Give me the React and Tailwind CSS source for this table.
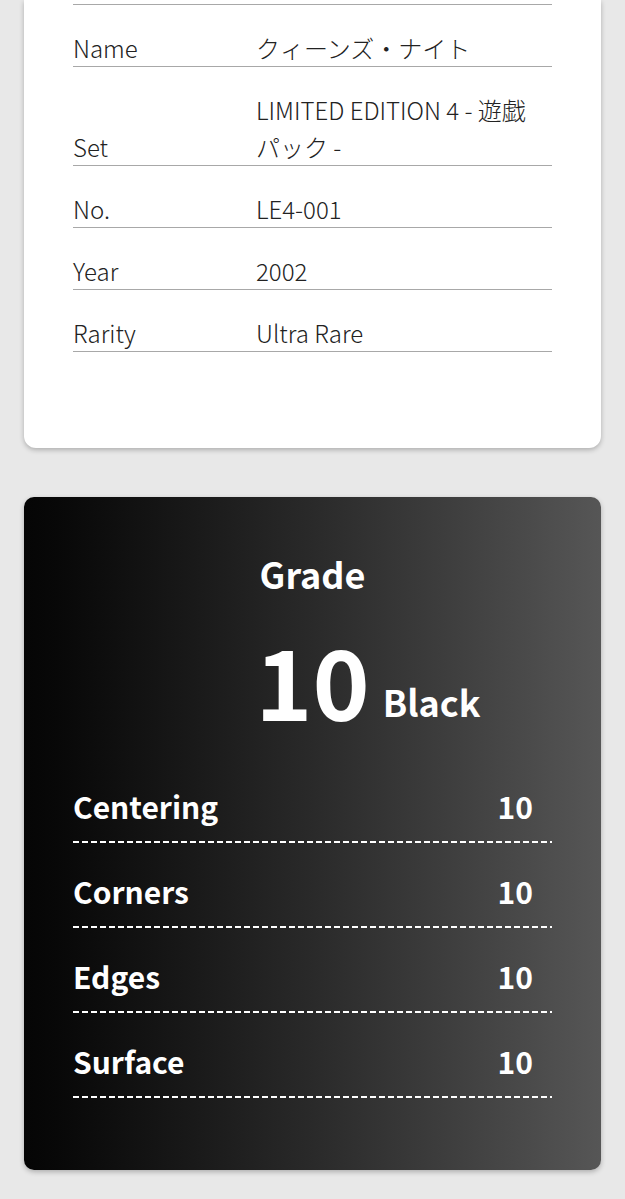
import React from "react";

const specs = [
  { label: "Name", value: "クィーンズ・ナイト" },
  { label: "Set", value: "LIMITED EDITION 4 - 遊戯パック -" },
  { label: "No.", value: "LE4-001" },
  { label: "Year", value: "2002" },
  { label: "Rarity", value: "Ultra Rare" },
];

const subgrades = [
  { label: "Centering", score: 10 },
  { label: "Corners", score: 10 },
  { label: "Edges", score: 10 },
  { label: "Surface", score: 10 },
];

const App = () => {
  return (
    <div
      className="min-h-[1199px] bg-[#e8e8e8] px-[24px] overflow-hidden"
      style={{ fontFamily: '"Noto Sans CJK JP", "Noto Sans", sans-serif' }}
    >
      {/* card details */}
      <div className="bg-white rounded-b-[12px] shadow-[0_2px_5px_rgba(0,0,0,0.25)] px-[49px] pb-[96px]">
        <div className="h-[5px] border-b border-[#a8a8a8]"></div>
        {specs.map((row) => (
          <div
            key={row.label}
            className="flex items-end pt-[24px] border-b border-[#a8a8a8] text-[24px] leading-[37px] font-light text-[#222]"
          >
            <div className="w-[183px] shrink-0">{row.label}</div>
            <div className="flex-1 pr-[16px]">{row.value}</div>
          </div>
        ))}
      </div>

      {/* grade */}
      <div className="mt-[49px] rounded-[10px] shadow-[0_2px_5px_rgba(0,0,0,0.25)] bg-gradient-to-r from-[#050505] to-[#565656] px-[49px] pt-[58px] pb-[72px] text-white font-bold">
        <div className="text-center text-[36px] leading-none">Grade</div>
        <div className="mt-[39px] flex justify-center">
          <div className="relative text-[97px] leading-none">
            10
            <span className="absolute left-full bottom-[8px] ml-[13px] text-[36px] leading-none">
              Black
            </span>
          </div>
        </div>
        <div className="mt-[31px]">
          {subgrades.map((s) => (
            <div key={s.label}>
              <div className="flex items-end justify-between pt-[33px] pb-[20px] text-[30px] leading-none">
                <span>{s.label}</span>
                <span className="pr-[19px]">{s.score}</span>
              </div>
              <div className="h-[2px] bg-[repeating-linear-gradient(90deg,#fff_0px,#fff_6px,transparent_6px,transparent_9px)]"></div>
            </div>
          ))}
        </div>
      </div>
    </div>
  );
};

export default App;
